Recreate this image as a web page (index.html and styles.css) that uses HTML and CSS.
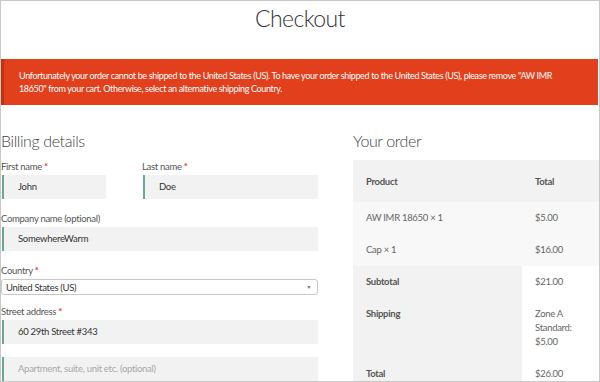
FILE: index.html
```html
<!DOCTYPE html>
<html lang="en">
  <head>
    <meta charset="UTF-8" />
    <meta name="viewport" content="width=device-width, initial-scale=1.0" />
    <title>Checkout</title>
    <link rel="stylesheet" href="styles.css">
  </head>
  <body>
    <div class="page">
      <h1 class="title">Checkout</h1>

      <div class="notice">
        Unfortunately your order cannot be shipped to the United States (US). To have your order shipped to the United States (US), please remove "AW IMR 18650" from your cart. Otherwise, select an alternative shipping Country.
      </div>

      <div class="columns">
        <div class="billing">
          <h3>Billing details</h3>

          <div class="row-pair">
            <div class="field first">
              <label>First name <span class="req">*</span></label>
              <div class="input">John</div>
            </div>
            <div class="field last">
              <label>Last name <span class="req">*</span></label>
              <div class="input">Doe</div>
            </div>
          </div>

          <div class="field">
            <label>Company name (optional)</label>
            <div class="input">SomewhereWarm</div>
          </div>

          <div class="field">
            <label>Country <span class="req">*</span></label>
            <div class="select">
              <span>United States (US)</span>
              <span class="arrow"></span>
            </div>
          </div>

          <div class="field">
            <label>Street address <span class="req">*</span></label>
            <div class="input">60 29th Street #343</div>
          </div>

          <div class="field">
            <div class="input placeholder">Apartment, suite, unit etc. (optional)</div>
          </div>
        </div>

        <div class="order">
          <h3>Your order</h3>
          <table class="order-table">
            <thead>
              <tr>
                <th class="col-product">Product</th>
                <th class="col-total">Total</th>
              </tr>
            </thead>
            <tbody>
              <tr>
                <td>AW IMR 18650 <strong>&times;&nbsp;1</strong></td>
                <td>$5.00</td>
              </tr>
              <tr>
                <td>Cap <strong>&times;&nbsp;1</strong></td>
                <td>$16.00</td>
              </tr>
            </tbody>
            <tfoot>
              <tr>
                <th>Subtotal</th>
                <td>$21.00</td>
              </tr>
              <tr class="shipping">
                <th>Shipping</th>
                <td>Zone A<br>Standard:<br>$5.00</td>
              </tr>
              <tr>
                <th>Total</th>
                <td>$26.00</td>
              </tr>
            </tfoot>
          </table>
        </div>
      </div>
    </div>
  </body>
</html>
```

FILE: styles.css
```css
body {
  margin: 0;
  background-color: #ffffff;
  font-family: "Lato", "Noto Sans", sans-serif;
  color: #555;
  letter-spacing: -0.3px;
}

.page {
  width: 600px;
  height: 382px;
  box-sizing: border-box;
  border: 1px solid #c8c8c8;
  overflow: hidden;
}

.title {
  margin: 0;
  height: 58px;
  padding-top: 1px;
  box-sizing: border-box;
  text-align: center;
  font-size: 23px;
  font-weight: 300;
  line-height: 32px;
  letter-spacing: -0.6px;
  color: #333;
}

.notice {
  background-color: #e2401c;
  border-left: 3px solid #c0330f;
  color: #ffffff;
  font-size: 9px;
  line-height: 13px;
  letter-spacing: -0.35px;
  padding: 10px 22px 10px 15px;
  margin-right: 1px;
}

.columns {
  display: grid;
  grid-template-columns: 317px 1fr;
  gap: 35px;
  padding-top: 25px;
}

h3 {
  margin: 0 0 8px;
  font-size: 16px;
  font-weight: 300;
  line-height: 22px;
  letter-spacing: -0.4px;
  color: #444;
}

.row-pair {
  display: flex;
  gap: 36px;
}

.field {
  margin-bottom: 13px;
}

.field.first {
  width: 105px;
}

.field.last {
  flex: 1;
}

label {
  display: block;
  font-size: 9.5px;
  line-height: 14px;
  margin-bottom: 1px;
  color: #555;
}

.req {
  color: #e2401c;
  font-weight: bold;
}

.input {
  height: 24px;
  box-sizing: border-box;
  background-color: #f2f2f2;
  border-left: 2px solid #6aa88f;
  padding-left: 14px;
  font-size: 9.5px;
  line-height: 24px;
  color: #333;
  margin-left: 1px;
}

.input.placeholder {
  color: #a8a8a8;
}

.select {
  display: flex;
  justify-content: space-between;
  align-items: center;
  height: 16px;
  box-sizing: border-box;
  border: 1px solid #c8c8c8;
  border-radius: 3px;
  padding: 0 6px 0 4px;
  font-size: 9.5px;
  color: #333;
  margin-bottom: -3px;
}

.arrow {
  width: 0;
  height: 0;
  border-left: 2.5px solid transparent;
  border-right: 2.5px solid transparent;
  border-top: 3px solid #888;
}

.order-table {
  width: 262px;
  border-collapse: collapse;
  font-size: 9.5px;
  color: #666;
}

.order-table th,
.order-table td {
  text-align: left;
  font-weight: normal;
  padding: 9px 13px 10px;
  line-height: 13px;
  vertical-align: top;
}

.order-table thead th {
  background-color: #f2f2f2;
  font-weight: bold;
  color: #555;
  padding: 15px 13px 14px;
}

.col-product {
  width: 143px;
}

.order-table tbody td {
  background-color: #f8f8f8;
}

.order-table tbody td strong {
  font-weight: normal;
}

.order-table tfoot th {
  background-color: #f2f2f2;
  font-weight: bold;
  color: #555;
}

.order-table tfoot td {
  background-color: #ffffff;
}

.order-table tr.shipping td {
  line-height: 14px;
  padding-bottom: 9px;
}
```
